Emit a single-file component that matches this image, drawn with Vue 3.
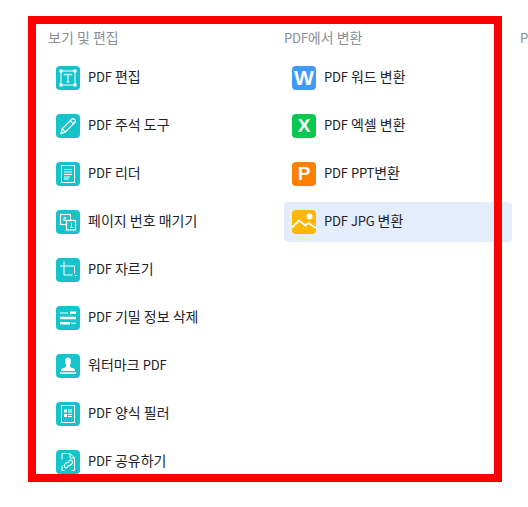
<script setup>
const split = (s) => s.split(/([A-Za-z]+)/).filter(Boolean).map((text) => ({ text, latin: /^[A-Za-z]/.test(text) }))
const editTools = [
  { id: 'edit', label: 'PDF 편집' },
  { id: 'pen', label: 'PDF 주석 도구' },
  { id: 'reader', label: 'PDF 리더' },
  { id: 'number', label: '페이지 번호 매기기' },
  { id: 'crop', label: 'PDF 자르기' },
  { id: 'redact', label: 'PDF 기밀 정보 삭제' },
  { id: 'stamp', label: '워터마크 PDF' },
  { id: 'form', label: 'PDF 양식 필러' },
  { id: 'share', label: 'PDF 공유하기' }
].map((t) => ({ ...t, parts: split(t.label) }))
const convertTools = [
  { id: 'w', label: 'PDF 워드 변환', letter: 'W', color: '#3f9bfa' },
  { id: 'x', label: 'PDF 엑셀 변환', letter: 'X', color: '#0ac74f' },
  { id: 'p', label: 'PDF PPT변환', letter: 'P', color: '#ff8000' },
  { id: 'jpg', label: 'PDF JPG 변환', color: '#ffb800', active: true }
].map((t) => ({ ...t, parts: split(t.label) }))
const heading2 = split('PDF에서 변환')
const heading3 = split('PDF로 변환')
</script>

<template>
  <div class="page">
    <div class="columns">
      <section class="column">
        <h3 class="heading">보기 및 편집</h3>
        <ul class="list">
          <li v-for="t in editTools" :key="t.id" class="item">
            <span class="icon teal">
              <svg viewBox="0 0 24 24" width="24" height="24" fill="none" stroke="#fff">
                <template v-if="t.id === 'edit'">
                  <rect x="5" y="5" width="14" height="14" />
                  <g fill="#fff" stroke="none">
                    <rect x="3.500" y="3.500" width="3" height="3" /><rect x="17.500" y="3.500" width="3" height="3" />
                    <rect x="3.500" y="17.500" width="3" height="3" /><rect x="17.500" y="17.500" width="3" height="3" />
                  </g>
                  <path d="M8.500 9.500V8.500H15.500V9.500M12 8.500V16M10.500 16H13.500" stroke="#c8f2f3" stroke-width="1.400" />
                </template>
                <template v-else-if="t.id === 'pen'">
                  <path d="M5 19.500L6.200 14.800L15.800 5.200C16.500 4.500 17.500 4.500 18.200 5.200L18.900 5.900C19.600 6.600 19.600 7.600 18.900 8.300L9.300 17.900Z" stroke-width="1.300" />
                  <path d="M14.300 6.700L17.400 9.800M6.200 14.800L9.300 17.900" stroke-width="1.100" />
                </template>
                <template v-else-if="t.id === 'reader'">
                  <rect x="5.500" y="3.500" width="13" height="17" stroke-width="1" />
                  <path d="M8 7.500H16M8 10H16M8 12.500H16M8 15H14M8 17H13" stroke-width="1" />
                </template>
                <template v-else-if="t.id === 'number'">
                  <rect x="4.500" y="4.500" width="10" height="10" stroke-width="1.200" />
                  <rect x="10.500" y="10.500" width="9" height="9.500" fill="#13c4cb" stroke-width="1.200" />
                  <path d="M7.500 7.500H9.800V9H7.800V10.500H10" stroke-width=".9" />
                  <path d="M14.500 13.500L15.500 13V17.500M14 17.500H17" stroke-width=".9" />
                </template>
                <template v-else-if="t.id === 'crop'">
                  <path d="M8 3.500V17H16.500M4 8H18.500V15.500M19 17.500H20.500" stroke-width="1" />
                </template>
                <template v-else-if="t.id === 'redact'">
                  <g fill="#fff" stroke="none">
                    <rect x="4" y="6.500" width="8" height="1" /><rect x="14" y="5.500" width="6" height="2.500" />
                    <rect x="4" y="10.700" width="16" height="2.500" />
                    <rect x="4" y="16" width="10" height="2.500" /><rect x="15" y="16.700" width="5" height="1" />
                  </g>
                </template>
                <template v-else-if="t.id === 'stamp'">
                  <g fill="#fff" stroke="none">
                    <path d="M9 7C9 4.800 10.300 3.500 12 3.500S15 4.800 15 7C15 9.500 14 10 14 12C14 13.200 14.600 13.700 17 14.200C18.500 14.500 19 15.300 19 16.200V17H5V16.200C5 15.300 5.500 14.500 7 14.200C9.400 13.700 10 13.200 10 12C10 10 9 9.500 9 7Z" />
                    <rect x="4" y="18.300" width="16" height="1.600" />
                  </g>
                </template>
                <template v-else-if="t.id === 'form'">
                  <rect x="5.500" y="3.500" width="13" height="17" stroke-width="1" />
                  <g fill="#fff" stroke="none">
                    <rect x="8" y="7.500" width="3" height="3" /><rect x="12" y="7.500" width="4" height="1" /><rect x="12" y="9.500" width="4" height="1" />
                    <rect x="8" y="12" width="3" height="3" /><rect x="12" y="12" width="4" height="1" /><rect x="12" y="14" width="4" height="1" />
                  </g>
                </template>
                <template v-else>
                  <path d="M6 9.500V3.500H14L18.500 8V20.500H15.500M6 16V20.500H8.500M14 3.500V8H18.500" stroke-width="1" />
                  <path d="M12.500 11.500L13.300 10.700C14.100 9.900 15.300 9.900 16.100 10.700C16.900 11.500 16.900 12.700 16.100 13.500L14.600 15C13.800 15.800 12.600 15.800 11.800 15M12.300 16.300L11.500 17.100C10.700 17.900 9.500 17.900 8.700 17.100C7.900 16.300 7.900 15.100 8.700 14.300L10.200 12.800C11 12 12.200 12 13 12.800" stroke-width="1.100" />
                </template>
              </svg>
            </span>
            <span class="label"><span v-for="(p, i) in t.parts" :key="i" :class="{ latin: p.latin }">{{ p.text }}</span></span>
          </li>
        </ul>
      </section>

      <section class="column">
        <h3 class="heading"><span v-for="(p, i) in heading2" :key="i" :class="{ latin: p.latin }">{{ p.text }}</span></h3>
        <ul class="list">
          <li v-for="t in convertTools" :key="t.id" class="item" :class="{ active: t.active }">
            <span class="icon" :style="{ background: t.color }">
              <span v-if="t.letter" class="letter" :class="'letter-' + t.id">{{ t.letter }}</span>
              <svg v-else viewBox="0 0 24 24" width="24" height="24" fill="none">
                <circle cx="17.500" cy="6.500" r="3" fill="#fff" />
                <path d="M0 17.500L7 10.500L13.500 15.500L16.500 13L24 18" stroke="#fff" stroke-width="1.800" />
              </svg>
            </span>
            <span class="label"><span v-for="(p, i) in t.parts" :key="i" :class="{ latin: p.latin }">{{ p.text }}</span></span>
          </li>
        </ul>
      </section>

      <section class="column">
        <h3 class="heading"><span v-for="(p, i) in heading3" :key="i" :class="{ latin: p.latin }">{{ p.text }}</span></h3>
      </section>
    </div>
    <div class="frame"></div>
  </div>
</template>

<style>
html, body { margin: 0; background: #fff; }
</style>

<style scoped>
.page {
  position: relative;
  width: 528px;
  height: 507px;
  overflow: hidden;
  background: #fff;
  font-family: "Noto Sans CJK KR", "Noto Sans", sans-serif;
}
.columns {
  display: flex;
  gap: 8px;
  padding: 27px 0 0 48px;
}
.column {
  flex: 0 0 228px;
}
.heading {
  margin: 0;
  height: 20px;
  font-size: 14px;
  line-height: 20px;
  font-weight: 400;
  color: #8a8f99;
}
.latin {
  font-size: 13px;
  letter-spacing: -0.2px;
}
.list {
  list-style: none;
  margin: 11px 0 0;
  padding: 0;
  display: flex;
  flex-direction: column;
  gap: 8px;
}
.item {
  display: flex;
  align-items: center;
  gap: 8px;
  height: 40px;
  padding-left: 8px;
  border-radius: 4px;
}
.item.active { background: #e4edfc; }
.icon {
  flex: none;
  width: 24px;
  height: 24px;
  border-radius: 4px;
  display: flex;
  align-items: center;
  justify-content: center;
  overflow: hidden;
}
.teal { background: #13c4cb; }
.letter {
  color: #fff;
  font-family: "Liberation Sans", sans-serif;
  font-weight: 700;
  font-size: 19px;
  line-height: 24px;
}
.letter-w { font-size: 21px; }
.label {
  font-size: 14px;
  line-height: 20px;
  color: #1f2329;
  white-space: nowrap;
  position: relative;
  top: -2px;
}
.frame {
  position: absolute;
  left: 28px;
  top: 16px;
  width: 458px;
  height: 450px;
  border: 8px solid #ff0000;
  pointer-events: none;
}
</style>
